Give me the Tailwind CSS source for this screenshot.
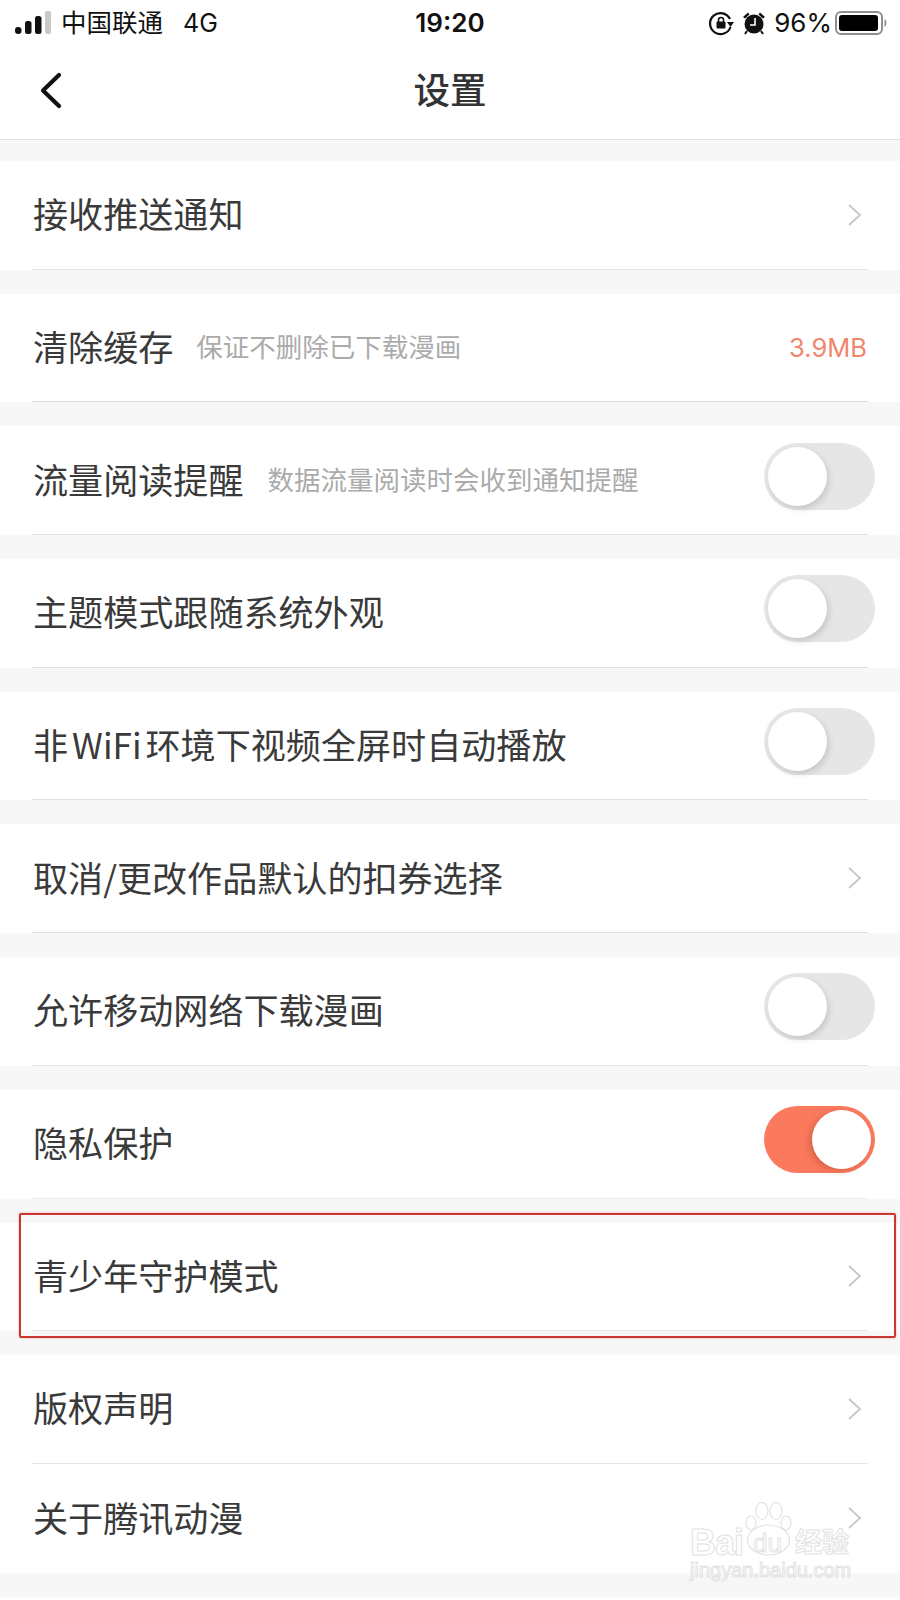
<!DOCTYPE html>
<html lang="zh-CN">
  <head>
    <meta charset="UTF-8" />
    <title>设置</title>
    <script src="https://cdn.jsdelivr.net/npm/@tailwindcss/browser@4"></script>
  </head>

  <body>
    <div class="relative w-[900px] h-[1600px] overflow-hidden bg-white text-[#3a3a3a] font-['Liberation_Sans','Noto_Sans_CJK_SC',sans-serif]">
      <!-- status bar -->
      <div class="h-[46px] flex items-center pl-[15px] pr-[12px] text-[#111] font-['Inter','Noto_Sans_CJK_SC',sans-serif]">
        <svg width="36" height="24" viewBox="0 0 36 24" class="mr-[10px]">
          <rect x="0" y="16" width="6.5" height="7" rx="3" fill="#111" />
          <rect x="10" y="10" width="6.5" height="13" rx="2.5" fill="#111" />
          <rect x="20" y="5" width="6.5" height="18" rx="2.5" fill="#111" />
          <rect x="30" y="0" width="6" height="23" rx="2" fill="#c9c9c9" />
        </svg>
        <span class="text-[25.5px] leading-none">中国联通</span>
        <span class="ml-[20px] text-[25px] leading-none">4G</span>
        <span class="absolute left-0 w-[900px] text-center text-[26px] font-semibold leading-none">19:20</span>
        <div class="ml-auto flex items-center">
          <svg width="26" height="26" viewBox="0 0 26 26" class="mr-[8px]">
            <path d="M22 9 A10.5 10.5 0 1 0 22.5 17" fill="none" stroke="#111" stroke-width="2.2" />
            <path d="M19 12 L26 12 L22.5 17 Z" fill="#111" />
            <rect x="8.5" y="11.5" width="9" height="7" rx="1" fill="#111" />
            <path d="M10.5 12 V10 A2.5 2.5 0 0 1 15.5 10 V12" fill="none" stroke="#111" stroke-width="1.6" />
          </svg>
          <svg width="24" height="24" viewBox="0 0 24 24" class="mr-[8px]">
            <circle cx="12" cy="13" r="9.5" fill="#111" />
            <path d="M1 6 L6 1.5 L7.5 3.5 L3 7.5 Z M23 6 L18 1.5 L16.5 3.5 L21 7.5 Z" fill="#111" />
            <path d="M5 20 L3 23 M19 20 L21 23" stroke="#111" stroke-width="2" />
            <path d="M13 7 V14 H8" fill="none" stroke="#fff" stroke-width="1.6" />
          </svg>
          <span class="text-[26px] leading-none">96%</span>
          <svg width="53" height="24" viewBox="0 0 53 24" class="ml-[3px]">
            <rect x="1" y="1" width="46" height="22" rx="5" fill="none" stroke="#8e8e8e" stroke-width="2" />
            <rect x="4" y="4" width="39" height="16" rx="3" fill="#000" />
            <path d="M49.5 8 C52 9 52 15 49.5 16 Z" fill="#8e8e8e" />
          </svg>
        </div>
      </div>

      <!-- nav -->
      <div class="h-[94px] relative flex items-center justify-center border-b border-[#e2e0e0]">
        <svg width="24" height="38" viewBox="0 0 24 38" class="absolute left-[39px] top-[26px]">
          <path d="M20 3 L4 18.5 L20 34" fill="none" stroke="#111" stroke-width="4.2" stroke-linecap="round" stroke-linejoin="round" />
        </svg>
        <span class="mb-[6px] text-[36.5px] font-medium leading-none text-[#333] font-['Noto_Sans_CJK_SC',sans-serif]">设置</span>
      </div>

      <!-- list -->
      <div class="bg-[#f8f7f7] pt-[21px] pb-[24px] flex flex-col gap-[24px] font-['Noto_Sans_CJK_SC',sans-serif]">
        <div class="bg-white h-[108.7px] pl-[32px] pr-[32px]">
          <div class="h-full border-b border-[#e6e5e5] flex items-center justify-between">
            <span class="mb-[4px] text-[35.1px] leading-none pl-[1px]">接收推送通知</span>
            <svg width="16" height="24" viewBox="0 0 16 24" class="mr-[5px]"><path d="M2 2 L13 12 L2 22" fill="none" stroke="#c6c6c6" stroke-width="1.8" /></svg>
          </div>
        </div>

        <div class="bg-white h-[108.7px] pl-[32px] pr-[32px]">
          <div class="h-full border-b border-[#e0dfdf] flex items-center">
            <span class="mb-[4px] text-[35.1px] leading-none pl-[1px]">清除缓存</span>
            <span class="mb-[2px] ml-[23px] text-[26.5px] leading-none text-[#ababab]">保证不删除已下载漫画</span>
            <span class="ml-auto mr-[1px] text-[25.5px] leading-none text-[#f0866c] font-['Inter',sans-serif]">3.9MB</span>
          </div>
        </div>

        <div class="bg-white h-[108.7px] pl-[32px] pr-[32px]">
          <div class="h-full border-b border-[#e0dfdf] flex items-center">
            <span class="mb-[4px] text-[35.1px] leading-none pl-[1px]">流量阅读提醒</span>
            <span class="mb-[2px] ml-[24px] text-[26.5px] leading-none text-[#ababab]">数据流量阅读时会收到通知提醒</span>
            <div class="ml-auto mb-[8px] mr-[-7px] w-[111px] h-[67px] rounded-full bg-[#e6e6e7] p-[4px]">
              <div class="w-[59px] h-[59px] rounded-full bg-white shadow-[2px_3px_6px_rgba(0,0,0,0.14)]"></div>
            </div>
          </div>
        </div>

        <div class="bg-white h-[108.7px] pl-[32px] pr-[32px]">
          <div class="h-full border-b border-[#e0dfdf] flex items-center">
            <span class="mb-[4px] text-[35.1px] leading-none pl-[1px]">主题模式跟随系统外观</span>
            <div class="ml-auto mb-[8px] mr-[-7px] w-[111px] h-[67px] rounded-full bg-[#e6e6e7] p-[4px]">
              <div class="w-[59px] h-[59px] rounded-full bg-white shadow-[2px_3px_6px_rgba(0,0,0,0.14)]"></div>
            </div>
          </div>
        </div>

        <div class="bg-white h-[108.7px] pl-[32px] pr-[32px]">
          <div class="h-full border-b border-[#e0dfdf] flex items-center">
            <span class="mb-[4px] text-[35.1px] leading-none pl-[1px]">非<span class="mx-[4px]">WiFi</span>环境下视频全屏时自动播放</span>
            <div class="ml-auto mb-[8px] mr-[-7px] w-[111px] h-[67px] rounded-full bg-[#e6e6e7] p-[4px]">
              <div class="w-[59px] h-[59px] rounded-full bg-white shadow-[2px_3px_6px_rgba(0,0,0,0.14)]"></div>
            </div>
          </div>
        </div>

        <div class="bg-white h-[108.7px] pl-[32px] pr-[32px]">
          <div class="h-full border-b border-[#e0dfdf] flex items-center justify-between">
            <span class="mb-[4px] text-[35.1px] leading-none pl-[1px]">取消/更改作品默认的扣券选择</span>
            <svg width="16" height="24" viewBox="0 0 16 24" class="mr-[5px]"><path d="M2 2 L13 12 L2 22" fill="none" stroke="#c6c6c6" stroke-width="1.8" /></svg>
          </div>
        </div>

        <div class="bg-white h-[108.7px] pl-[32px] pr-[32px]">
          <div class="h-full border-b border-[#e6e5e5] flex items-center">
            <span class="mb-[4px] text-[35.1px] leading-none pl-[1px]">允许移动网络下载漫画</span>
            <div class="ml-auto mb-[8px] mr-[-7px] w-[111px] h-[67px] rounded-full bg-[#e6e6e7] p-[4px]">
              <div class="w-[59px] h-[59px] rounded-full bg-white shadow-[2px_3px_6px_rgba(0,0,0,0.14)]"></div>
            </div>
          </div>
        </div>

        <div class="bg-white h-[108.7px] pl-[32px] pr-[32px]">
          <div class="h-full border-b border-[#eeeded] flex items-center">
            <span class="mb-[4px] text-[35.1px] leading-none pl-[1px]">隐私保护</span>
            <div class="ml-auto mb-[8px] mr-[-7px] w-[111px] h-[67px] rounded-full bg-[#fb7a5d] p-[4px] flex justify-end">
              <div class="w-[59px] h-[59px] rounded-full bg-white shadow-[-3px_2px_6px_rgba(120,40,20,0.25)]"></div>
            </div>
          </div>
        </div>

        <div class="bg-white h-[108.7px] pl-[32px] pr-[32px]">
          <div class="h-full border-b border-[#e6e5e5] flex items-center justify-between">
            <span class="mb-[4px] text-[35.1px] leading-none pl-[1px]">青少年守护模式</span>
            <svg width="16" height="24" viewBox="0 0 16 24" class="mr-[5px]"><path d="M2 2 L13 12 L2 22" fill="none" stroke="#c6c6c6" stroke-width="1.8" /></svg>
          </div>
        </div>

        <div>
          <div class="bg-white h-[108.7px] pl-[32px] pr-[32px]">
            <div class="h-full border-b border-[#e6e5e5] flex items-center justify-between">
              <span class="mb-[4px] text-[35.1px] leading-none pl-[1px]">版权声明</span>
              <svg width="16" height="24" viewBox="0 0 16 24" class="mr-[5px]"><path d="M2 2 L13 12 L2 22" fill="none" stroke="#c6c6c6" stroke-width="1.8" /></svg>
            </div>
          </div>
          <div class="bg-white h-[108.7px] pl-[32px] pr-[32px] flex items-center justify-between">
            <span class="mb-[4px] text-[35.1px] leading-none pl-[1px]">关于腾讯动漫</span>
            <svg width="16" height="24" viewBox="0 0 16 24" class="mr-[5px]"><path d="M2 2 L13 12 L2 22" fill="none" stroke="#c6c6c6" stroke-width="1.8" /></svg>
          </div>
        </div>
      </div>

      <!-- red highlight frame -->
      <div class="absolute left-[19px] top-[1213px] w-[877px] h-[125px] border-2 border-[#c9362f] rounded-[2px] shadow-[0_0_2px_rgba(203,58,54,0.5)]"></div>

      <!-- watermark -->
      <div class="absolute left-[690px] top-[1500px] w-[170px] h-[90px]">
        <svg width="47" height="56" viewBox="0 0 47 56" class="absolute left-[55px] top-[2px]">
          <g fill="#fff" fill-opacity="0.55" stroke="#e2e2e2" stroke-width="1.2">
            <ellipse cx="6" cy="21" rx="5" ry="7" />
            <ellipse cx="17" cy="9" rx="6" ry="8.5" />
            <ellipse cx="31" cy="9" rx="6" ry="8.5" />
            <ellipse cx="41" cy="21" rx="5" ry="7" />
            <ellipse cx="23.5" cy="38" rx="21" ry="15" />
          </g>
        </svg>
        <span class="absolute left-0 top-[25px] text-[36px] leading-none tracking-[-1px] font-bold font-['Liberation_Sans',sans-serif] text-white/60 [-webkit-text-stroke:1px_#e2e2e2]">Bai</span>
        <span class="absolute left-[63px] top-[30px] text-[26px] leading-none font-['Liberation_Sans',sans-serif] text-white/60 [-webkit-text-stroke:1px_#e2e2e2]">du</span>
        <span class="absolute left-[105px] top-[27px] text-[27px] leading-none font-bold font-['Noto_Sans_CJK_SC',sans-serif] text-white/60 [-webkit-text-stroke:1px_#e2e2e2]">经验</span>
        <span class="absolute left-0 top-[60px] text-[20px] leading-none font-['Liberation_Sans',sans-serif] text-white/60 [-webkit-text-stroke:1px_#e2e2e2]">jingyan.baidu.com</span>
      </div>
    </div>
  </body>
</html>
